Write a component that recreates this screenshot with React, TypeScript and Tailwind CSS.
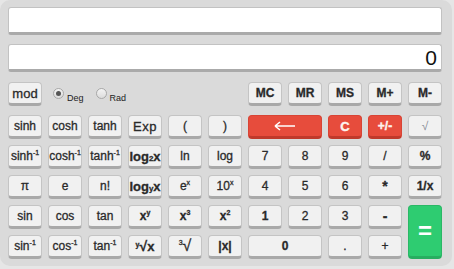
import type { ReactNode } from 'react'

type Tone = 'gray' | 'red' | 'green'

function Key({ children, tone = 'gray', className = '' }: { children: ReactNode; tone?: Tone; className?: string }) {
  const toneClass =
    tone === 'red'
      ? 'bg-[#e74c3c] border-[#d84435] border-b-[#c0392b] text-[#fdf3ee] [-webkit-text-stroke:0.4px_#fdf3ee]'
      : tone === 'green'
        ? 'bg-[#2ecc71] border-[#2ab866] border-b-[#27ae60] text-white'
        : 'bg-[#f1f1f1] border-[#c4c4c4] border-b-[#a9a9a9] text-[#2a2a2a] [-webkit-text-stroke:0.3px_#2a2a2a]'
  return (
    <div
      className={`flex items-center justify-center rounded-[4px] border border-b-[3px] text-[12px] leading-none ${toneClass} ${className}`}
    >
      {children}
    </div>
  )
}

const Sup = ({ children }: { children: ReactNode }) => (
  <sup className="relative -top-[4px] align-baseline text-[7px] leading-none">{children}</sup>
)
const Sub = ({ children }: { children: ReactNode }) => (
  <sub className="relative top-[3px] align-baseline text-[8px] leading-none">{children}</sub>
)

function Radio({ checked, label }: { checked?: boolean; label: string }) {
  return (
    <div className="flex items-start gap-[3px]">
      <div className="mt-[6px] flex h-[11px] w-[11px] items-center justify-center rounded-full border border-[#a8a8a8] bg-gradient-to-b from-[#f4f4f4] to-[#dcdcdc]">
        {checked && <div className="h-[5px] w-[5px] rounded-full bg-[#555]" />}
      </div>
      <span className="mt-[12px] text-[9px] leading-none text-[#222]">{label}</span>
    </div>
  )
}

export default function App() {
  return (
    <div className="h-[269px] w-[454px] overflow-hidden bg-[#e6e6e6]" style={{ fontFamily: '"Liberation Sans", Arial, sans-serif' }}>
      <div className="h-[266px] w-[452px] rounded-[10px] bg-[#dadada] px-[8px] pt-[7px]">
        <div className="h-[28px] w-[434px] rounded-[3px] border border-b-[3px] border-[#c2c2c2] border-b-[#aaa] bg-white" />
        <div className="mt-[9px] flex h-[28px] w-[434px] items-center justify-end rounded-[3px] border border-b-[3px] border-[#c2c2c2] border-b-[#aaa] bg-white pr-[4px] text-[21px] leading-none text-[#111]">
          0
        </div>

        <div className="mt-[10px] grid grid-cols-[repeat(11,34px)] grid-rows-[24px] gap-x-[6px]">
          <Key className="text-[13px]">mod</Key>
          <div className="col-span-4 flex gap-[12px] pl-[5px]">
            <Radio checked label="Deg" />
            <Radio label="Rad" />
          </div>
          <div />
          <Key className="font-bold">MC</Key>
          <Key className="font-bold">MR</Key>
          <Key className="font-bold">MS</Key>
          <Key className="font-bold">M+</Key>
          <Key className="font-bold">M-</Key>
        </div>

        <div className="mt-[9px] grid grid-cols-[repeat(11,34px)] grid-rows-[repeat(5,24px)] gap-x-[6px] gap-y-[6px]">
          <Key>sinh</Key>
          <Key>cosh</Key>
          <Key>tanh</Key>
          <Key className="text-[13px] tracking-[0.5px]">Exp</Key>
          <Key>(</Key>
          <Key>)</Key>
          <Key tone="red" className="col-span-2">
            <svg width="22" height="10" viewBox="0 0 22 10">
              <path d="M1 5 H21 M1 5 L6 1 M1 5 L6 9" stroke="white" strokeWidth="1.6" fill="none" />
            </svg>
          </Key>
          <Key tone="red" className="text-[13px] font-bold">C</Key>
          <Key tone="red" className="font-bold">+/-</Key>
          <Key className="text-[#8a8f99] [-webkit-text-stroke:0px]">√</Key>

          <Key>sinh<Sup>-1</Sup></Key>
          <Key>cosh<Sup>-1</Sup></Key>
          <Key>tanh<Sup>-1</Sup></Key>
          <Key className="text-[13px] font-bold">log<Sub>2</Sub>x</Key>
          <Key>ln</Key>
          <Key>log</Key>
          <Key>7</Key>
          <Key>8</Key>
          <Key>9</Key>
          <Key>/</Key>
          <Key className="font-bold">%</Key>

          <Key>π</Key>
          <Key>e</Key>
          <Key>n!</Key>
          <Key className="text-[13px] font-bold">log<Sub>y</Sub>x</Key>
          <Key>e<Sup>x</Sup></Key>
          <Key>10<Sup>x</Sup></Key>
          <Key>4</Key>
          <Key>5</Key>
          <Key>6</Key>
          <Key className="text-[14px] font-bold">*</Key>
          <Key className="font-bold">1/x</Key>

          <Key>sin</Key>
          <Key>cos</Key>
          <Key>tan</Key>
          <Key className="font-bold">x<Sup>y</Sup></Key>
          <Key className="font-bold">x<Sup>3</Sup></Key>
          <Key className="font-bold">x<Sup>2</Sup></Key>
          <Key className="font-bold">1</Key>
          <Key>2</Key>
          <Key>3</Key>
          <Key className="text-[14px] font-bold">-</Key>
          <Key tone="green" className="row-span-2 text-[24px] font-bold">=</Key>

          <Key>sin<Sup>-1</Sup></Key>
          <Key>cos<Sup>-1</Sup></Key>
          <Key>tan<Sup>-1</Sup></Key>
          <Key className="font-bold">
            <span className="text-[14px]"><Sup>y</Sup>√</span>
            <span className="text-[13px]">x</span>
          </Key>
          <Key className="text-[16px]"><Sup>3</Sup>√</Key>
          <Key className="font-bold">|x|</Key>
          <Key className="col-span-2 font-bold">0</Key>
          <Key>.</Key>
          <Key>+</Key>
        </div>
      </div>
    </div>
  )
}
